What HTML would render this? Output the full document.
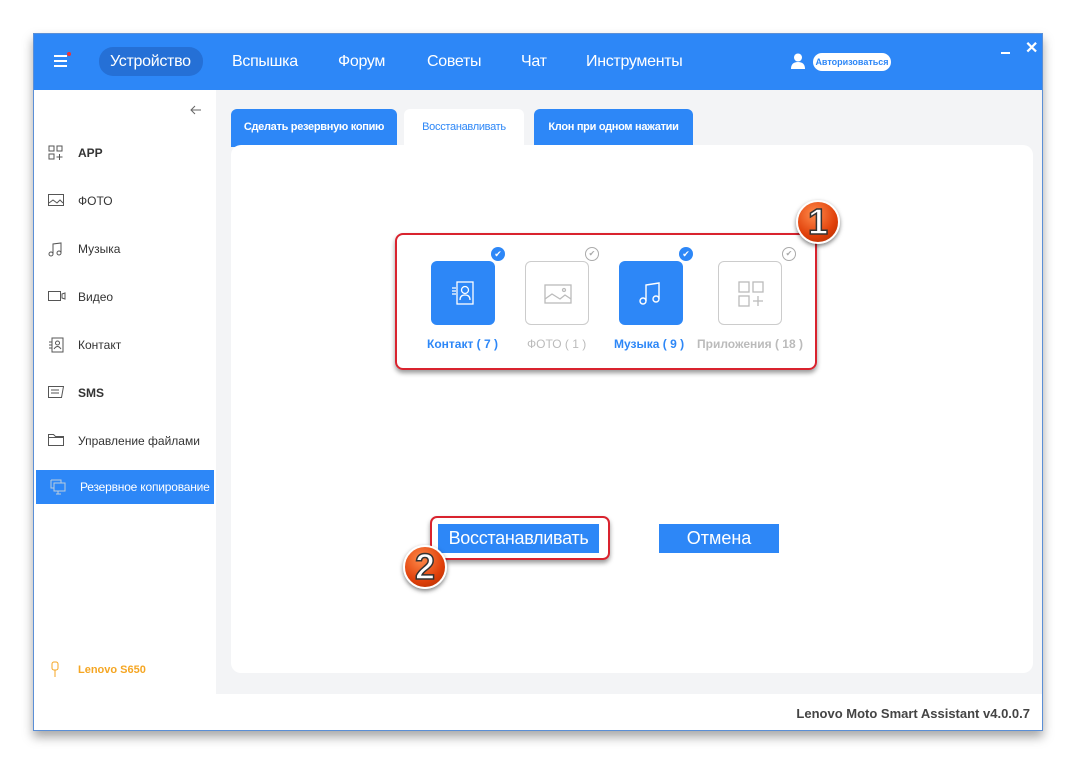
<!DOCTYPE html>
<html><head><meta charset="utf-8"><style>
*{margin:0;padding:0;box-sizing:border-box}
body{width:1076px;height:764px;background:#fff;font-family:"Liberation Sans",sans-serif;position:relative;overflow:hidden}
.win{position:absolute;left:33px;top:33px;width:1010px;height:698px;background:#fff;border:1px solid #5b8fd6;box-shadow:0 6px 10px rgba(0,0,0,.35);overflow:hidden}
.hdr{position:absolute;left:0;top:0;width:100%;height:56px;background:#2d87f7;color:#fff}
.nav{position:absolute;top:19px;font-size:16px;letter-spacing:-0.3px}
.side{position:absolute;left:0;top:56px;width:182px;height:604px;background:#fff}
.main{position:absolute;left:182px;top:56px;width:827px;height:604px;background:#f3f4f6}
.item{position:absolute;left:0;width:180px;height:34px;font-size:12px;color:#333}
.item span{position:absolute;left:44px;top:10px}
.item svg{position:absolute;left:14px;top:9px}
.tab{position:absolute;top:75px;height:38px;background:#2d87f7;color:#fff;font-size:11px;letter-spacing:-0.3px;font-weight:bold;border-radius:6px 6px 0 0;text-align:center;padding-top:12px;white-space:nowrap}
.card{position:absolute;left:197px;top:111px;width:802px;height:528px;background:#fff;border-radius:10px}
.ic{position:absolute;top:261px;width:64px;height:64px;border-radius:6px}
.lbl{position:absolute;top:337px;font-size:12px;font-weight:bold}
.chk{position:absolute;top:247px;width:14px;height:14px;border-radius:50%}
.badge{position:absolute;width:44px;height:44px;border-radius:50%;background:radial-gradient(circle at 40% 30%,#ff8a4a,#e0400a 60%,#a82a00);border:2px solid #fff;box-shadow:0 2px 4px rgba(0,0,0,.5);color:#fff;font-size:36px;font-weight:bold;text-align:center;line-height:40px;-webkit-text-stroke:1.5px #333}
</style></head><body>
<div class="win">
<div class="hdr">
<div style="position:absolute;left:20px;top:21px;width:13px;height:2px;background:#fff;box-shadow:0 5px 0 #fff,0 10px 0 #fff"></div>
<div style="position:absolute;left:33px;top:18px;width:4px;height:4px;border-radius:50%;background:#e33"></div>
<div style="position:absolute;left:65px;top:13px;width:104px;height:29px;border-radius:14px;background:#2570d6"></div>
<div class="nav" style="left:76px">Устройство</div>
<div class="nav" style="left:198px">Вспышка</div>
<div class="nav" style="left:304px">Форум</div>
<div class="nav" style="left:393px">Советы</div>
<div class="nav" style="left:487px">Чат</div>
<div class="nav" style="left:552px">Инструменты</div>
<svg style="position:absolute;left:757px;top:19px" width="14" height="16"><circle cx="7" cy="4.5" r="4" fill="#fff"/><path d="M0 16 Q0 9 7 9 Q14 9 14 16Z" fill="#fff"/></svg>
<div style="position:absolute;left:779px;top:19px;width:78px;height:18px;border-radius:9px;background:#fff;color:#2d87f7;font-size:9px;font-weight:bold;text-align:center;line-height:18px">Авторизоваться</div>
<div style="position:absolute;left:967px;top:18px;width:9px;height:2px;background:#fff"></div>
<div style="position:absolute;left:991px;top:4px;font-size:16px;font-weight:bold">✕</div>
</div>
<div class="side">
<svg style="position:absolute;left:156px;top:15px" width="12" height="10"><path d="M11 5H1M5 1L1 5l4 4" stroke="#666" fill="none"/></svg>
<div class="item" style="top:46px"><svg width="16" height="16" fill="none" stroke="#555"><rect x="1" y="1" width="5" height="5"/><rect x="9" y="1" width="5" height="5"/><rect x="1" y="9" width="5" height="5"/><path d="M11.5 9v6M8.5 12h6"/></svg><span style="font-weight:bold">APP</span></div>
<div class="item" style="top:94px"><svg width="16" height="14" fill="none" stroke="#555"><rect x=".5" y="1.5" width="15" height="11"/><path d="M1 10l4-3 4 3 3-3 3 3"/></svg><span>ФОТО</span></div>
<div class="item" style="top:142px"><svg width="16" height="16" fill="none" stroke="#555"><path d="M5 13V3l8-1v10"/><circle cx="3" cy="13" r="2"/><circle cx="11" cy="12" r="2"/></svg><span>Музыка</span></div>
<div class="item" style="top:190px"><svg width="18" height="14" fill="none" stroke="#555"><rect x=".5" y="2.5" width="12" height="9"/><path d="M14 5v4l3 1V4z"/></svg><span>Видео</span></div>
<div class="item" style="top:238px"><svg width="16" height="16" fill="none" stroke="#555"><rect x="4" y="1" width="11" height="14"/><circle cx="9.5" cy="6" r="2"/><path d="M6 12q3.5-5 7 0M1 5h3M1 8h3M1 11h3"/></svg><span>Контакт</span></div>
<div class="item" style="top:286px"><svg width="16" height="14" fill="none" stroke="#555"><path d="M.5 1.5h15l-2 11H.5z M3 5h8M3 8h8"/></svg><span style="font-weight:bold">SMS</span></div>
<div class="item" style="top:334px"><svg width="16" height="14" fill="none" stroke="#555"><path d="M.5 1.5h5l2 2h8v9H.5z M.5 4.5h15"/></svg><span>Управление файлами</span></div>
<div class="item" style="top:380px;left:2px;width:178px;background:#2d87f7;color:#fff"><svg width="16" height="16" fill="none" stroke="#bcd"><rect x="4" y="4" width="11" height="8"/><path d="M1 1h10v3M1 1v8h3M8 12v3M6 15h5"/></svg><span style="letter-spacing:-0.2px">Резервное копирование</span></div>
<svg style="position:absolute;left:17px;top:571px" width="8" height="16" fill="none" stroke="#f5a623"><rect x="1" y="1" width="6" height="8" rx="2"/><path d="M4 9v7"/></svg>
<div style="position:absolute;left:44px;top:574px;color:#f5a623;font-size:11px;font-weight:bold">Lenovo S650</div>
</div>
<div class="main"></div>
<div class="tab" style="left:197px;width:166px">Сделать резервную копию</div>
<div class="tab" style="left:370px;width:120px;background:#fff;color:#2d87f7;font-weight:normal">Восстанавливать</div>
<div class="tab" style="left:500px;width:159px">Клон при одном нажатии</div>
<div class="card"></div>
<div style="position:absolute;left:0;top:660px;width:100%;height:38px;background:#fff"></div>
<div style="position:absolute;right:12px;top:672px;font-size:13px;font-weight:bold;color:#444">Lenovo Moto Smart Assistant v4.0.0.7</div>
</div>
<div style="position:absolute;left:395px;top:233px;width:422px;height:137px;border:2px solid #d9232e;border-radius:8px;box-shadow:0 3px 5px rgba(0,0,0,.4),inset 0 0 0 2px #fff"></div>
<div class="ic" style="left:431px;background:#2d87f7"><svg style="margin:18px" width="28" height="28" fill="none" stroke="#fff" stroke-width="1.3"><rect x="8" y="3" width="16" height="22"/><circle cx="16" cy="11" r="3.5"/><path d="M11 21q0-5 5-5t5 5M3 9h4M3 12h4M3 15h4"/></svg></div>
<div class="ic" style="left:525px;border:1.5px solid #ccc"><svg style="margin:18px" width="28" height="28" fill="none" stroke="#bbb" stroke-width="1.3"><rect x="1" y="5" width="26" height="18"/><path d="M1 19l7-5 8 5 5-4 6 4"/><circle cx="20" cy="10" r="1.5"/></svg></div>
<div class="ic" style="left:619px;background:#2d87f7"><svg style="margin:18px" width="28" height="28" fill="none" stroke="#fff" stroke-width="1.4"><path d="M9 22V6l13-2v16"/><circle cx="6" cy="22" r="3"/><circle cx="19" cy="20" r="3"/></svg></div>
<div class="ic" style="left:718px;border:1.5px solid #ccc"><svg style="margin:18px" width="28" height="28" fill="none" stroke="#bbb" stroke-width="1.3"><rect x="2" y="2" width="10" height="10"/><rect x="16" y="2" width="10" height="10"/><rect x="2" y="16" width="10" height="10"/><path d="M21 16v10M16 21h10"/></svg></div>
<div class="chk" style="left:491px;background:#2d87f7;color:#fff;font-size:9px;text-align:center;line-height:14px">✔</div>
<div class="chk" style="left:585px;border:1.5px solid #aaa;color:#aaa;font-size:8px;text-align:center;line-height:11px">✔</div>
<div class="chk" style="left:679px;background:#2d87f7;color:#fff;font-size:9px;text-align:center;line-height:14px">✔</div>
<div class="chk" style="left:782px;border:1.5px solid #aaa;color:#aaa;font-size:8px;text-align:center;line-height:11px">✔</div>
<div class="lbl" style="left:427px;color:#2d87f7">Контакт ( 7 )</div>
<div class="lbl" style="left:527px;color:#bbb;font-weight:normal">ФОТО ( 1 )</div>
<div class="lbl" style="left:614px;color:#2d87f7">Музыка ( 9 )</div>
<div class="lbl" style="left:697px;color:#bbb">Приложения ( 18 )</div>
<div class="badge" style="left:796px;top:200px">1</div>
<div style="position:absolute;left:430px;top:516px;width:180px;height:44px;border:2px solid #d9232e;border-radius:7px;box-shadow:0 3px 5px rgba(0,0,0,.4)"></div>
<div style="position:absolute;left:438px;top:524px;width:161px;height:29px;background:#2d87f7;color:#fff;font-size:18px;text-align:center;line-height:29px;letter-spacing:-0.3px">Восстанавливать</div>
<div style="position:absolute;left:659px;top:524px;width:120px;height:29px;background:#2d87f7;color:#fff;font-size:18px;text-align:center;line-height:29px">Отмена</div>
<div class="badge" style="left:403px;top:545px">2</div>
</body></html>
